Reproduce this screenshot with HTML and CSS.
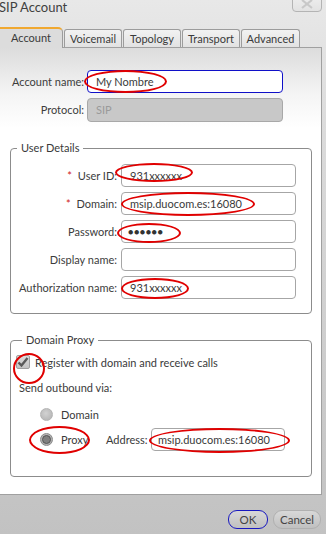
FILE: index.html
```html
<!DOCTYPE html>
<html>
<head>
<meta charset="utf-8">
<link rel="stylesheet" href="styles.css">
</head>
<body>
<div class="window">
  <header class="titlebar">
    <span class="title">SIP Account</span>
    <span class="close"><svg width="14" height="10" viewBox="0 0 14 10"><path d="M2 1 L12 9 M12 1 L2 9" stroke="#c8c8c8" stroke-width="2.2" fill="none"/></svg></span>
  </header>
  <nav class="tabs">
    <div class="tab active">Account</div>
    <div class="tab">Voicemail</div>
    <div class="tab">Topology</div>
    <div class="tab">Transport</div>
    <div class="tab">Advanced</div>
  </nav>
  <section class="panel">
    <div class="row top">
      <label class="lbl">Account name:</label>
      <div class="field focus">My Nombre</div>
    </div>
    <div class="row top">
      <label class="lbl">Protocol:</label>
      <div class="field disabled">SIP</div>
    </div>

    <fieldset class="group user">
      <legend>User Details</legend>
      <div class="row">
        <label class="lbl"><span class="req">*</span> User ID:</label>
        <div class="field">931xxxxxx</div>
      </div>
      <div class="row">
        <label class="lbl"><span class="req">*</span> Domain:</label>
        <div class="field">msip.duocom.es:16080</div>
      </div>
      <div class="row">
        <label class="lbl">Password:</label>
        <div class="field dots">●●●●●●</div>
      </div>
      <div class="row">
        <label class="lbl">Display name:</label>
        <div class="field"></div>
      </div>
      <div class="row last">
        <label class="lbl">Authorization name:</label>
        <div class="field">931xxxxxx</div>
      </div>
    </fieldset>

    <fieldset class="group proxy">
      <legend>Domain Proxy</legend>
      <div class="check-row">
        <span class="checkbox"><svg width="12" height="12" viewBox="0 0 12 12"><path d="M1.5 6.5 L4.5 9.5 L10.5 2" stroke="#5a5a5a" stroke-width="2.4" fill="none"/></svg></span>
        <span>Register with domain and receive calls</span>
      </div>
      <div class="send">Send outbound via:</div>
      <div class="radio-row">
        <span class="radio"></span>
        <span>Domain</span>
      </div>
      <div class="radio-row proxy-row">
        <span class="radio on"></span>
        <span class="proxy-lbl">Proxy</span>
        <span class="addr-lbl">Address:</span>
        <div class="field addr">msip.duocom.es:16080</div>
      </div>
    </fieldset>
  </section>
  <footer class="footer">
    <button class="btn ok">OK</button>
    <button class="btn">Cancel</button>
  </footer>
</div>

<div class="mark m1"></div>
<div class="mark m2"></div>
<div class="mark m3"></div>
<div class="mark m4"></div>
<div class="mark m5"></div>
<div class="mark m6"></div>
<div class="mark m7"></div>
<div class="mark m8"></div>
</body>
</html>
```

FILE: styles.css
```css
* { box-sizing: border-box; }
html, body { margin: 0; padding: 0; }
body {
  width: 326px;
  height: 534px;
  overflow: hidden;
  position: relative;
  font-family: Lato, "Open Sans", sans-serif;
  font-size: 11px;
  color: #3a3a3a;
  background: linear-gradient(#e8e8e8 0px, #dcdcdc 120px, #c9c9c9 420px, #c2c2c2 534px);
}
.window { display: flex; flex-direction: column; }

.titlebar {
  height: 27px;
  display: flex;
  justify-content: space-between;
  align-items: flex-start;
}
.title {
  font-size: 13px;
  line-height: 15px;
  color: #404040;
  margin-left: -1px;
}
.close {
  width: 30px;
  height: 18px;
  margin-top: -6px;
  margin-right: 4px;
  border: 1px solid #b4b4b4;
  border-radius: 4px;
  background: linear-gradient(#efefef, #e2e2e2);
  display: flex;
  align-items: flex-end;
  justify-content: center;
  padding-bottom: 2px;
}

.tabs {
  height: 20px;
  display: grid;
  grid-template-columns: 63px 59px 59px 59px 60px;
  align-items: end;
}
.tab {
  height: 18px;
  border: 1px solid #9c9c9c;
  border-bottom: none;
  border-radius: 3px 3px 0 0;
  background: linear-gradient(#f2f2f2, #e2e2e2);
  text-align: center;
  font-size: 11px;
  line-height: 17px;
  color: #3a3a3a;
  margin-left: 1px;
}
.tab:first-child { margin-left: 0; }
.tab.active {
  height: 21px;
  margin-bottom: -1px;
  border: none;
  border-right: 1px solid #9c9c9c;
  border-top: 2px solid #f0a830;
  border-radius: 0 5px 0 0;
  background: #dcdcdc;
  line-height: 18px;
  position: relative;
  z-index: 1;
}

.panel {
  height: 448px;
  margin-right: 4px;
  border: 1px solid #a0a0a0;
  border-left: none;
  background: linear-gradient(#dcdcdc 0px, #f4f4f4 45px, #ffffff 80px, #ffffff 100%);
  padding-top: 22px;
}

.row {
  display: flex;
  align-items: center;
  height: 23px;
  margin-bottom: 5px;
}
.row.last { margin-bottom: 0; }
.lbl {
  text-align: right;
  color: #3c3c3c;
  white-space: nowrap;
}
.row.top .lbl { width: 84px; }
.row.top .field { width: 196px; margin-left: 3px; }
.field {
  height: 23px;
  border: 1px solid #a6a6a6;
  border-radius: 4px;
  background: #fff;
  padding-left: 8px;
  line-height: 21px;
  color: #3a3a3a;
  white-space: nowrap;
}
.field.focus { border-color: #1010c8; }
.field.disabled {
  background: #c8c8c8;
  border-color: #a8a8a8;
  color: #9a9a9a;
  height: 24px;
}
.req { color: #d02020; margin-right: 3px; }
.dots { font-size: 9px; letter-spacing: 0.5px; color: #333; padding-left: 6px; }

.group {
  margin: 0;
  margin-left: 10px;
  width: 302px;
  border: 1px solid #8c8c8c;
  border-radius: 4px;
  padding: 0;
}
.group legend {
  font-size: 11px;
  line-height: 14px;
  padding: 0 4px;
  margin-left: 6px;
  color: #3a3a3a;
}
.user { margin-top: 20px; padding-top: 9px; padding-bottom: 14px; }
.user .lbl { width: 106px; }
.user .field { width: 175px; margin-left: 4px; }

.proxy { margin-top: 19px; padding-top: 8px; padding-bottom: 25px; padding-left: 5px; }
.check-row { display: flex; align-items: center; height: 14px; gap: 5px; }
.checkbox {
  width: 14px; height: 14px;
  border: 1px solid #a0a0a0;
  border-radius: 2px;
  background: linear-gradient(#dcdcdc, #c4c4c4);
  display: flex; align-items: center; justify-content: center;
}
.send { margin-top: 12px; line-height: 14px; padding-left: 3px; }
.radio-row { display: flex; align-items: center; height: 14px; margin-top: 12px; padding-left: 24px; }
.radio {
  width: 13px; height: 13px;
  border-radius: 50%;
  background: radial-gradient(circle at 45% 40%, #d2d2d2, #b0b0b0);
  border: 1px solid #b4b4b4;
  margin-right: 8px;
  display: flex; align-items: center; justify-content: center;
}
.radio.on { background: radial-gradient(circle at 45% 40%, #c6c6c6, #a8a8a8); border-color: #8a8a8a; }
.radio.on::after {
  content: "";
  width: 7px; height: 7px; border-radius: 50%;
  background: #808080;
  border: 1px solid #555;
}
.proxy-row { height: 23px; margin-top: 7px; }
.proxy-lbl { width: 45px; }
.addr-lbl { width: 45px; }
.field.addr { width: 134px; padding-left: 6px; }

.footer {
  display: flex;
  justify-content: flex-end;
  gap: 5px;
  padding-top: 15px;
  padding-right: 5px;
}
.btn {
  height: 19px;
  border: 1px solid #b0b0b0;
  border-radius: 9px;
  background: linear-gradient(#d8d8d8, #c0c0c0);
  font-family: Lato, "Open Sans", sans-serif;
  font-size: 11.5px;
  color: #444;
  padding: 0;
  line-height: 17px;
}
.btn.ok { width: 40px; border-color: #1818c0; }
.btn:not(.ok) { width: 48px; }

.mark {
  position: absolute;
  border: 2px solid #e00000;
  border-radius: 50%;
  pointer-events: none;
}
.m1 { left: 84px; top: 70px; width: 83px; height: 23px; }
.m2 { left: 115px; top: 163px; width: 78px; height: 19px; }
.m3 { left: 121px; top: 192px; width: 134px; height: 24px; }
.m4 { left: 117px; top: 223px; width: 64px; height: 20px; }
.m5 { left: 121px; top: 278px; width: 68px; height: 21px; }
.m6 { left: 13px; top: 353px; width: 32px; height: 31px; }
.m7 { left: 29px; top: 426px; width: 61px; height: 28px; }
.m8 { left: 149px; top: 428px; width: 141px; height: 25px; }
```
